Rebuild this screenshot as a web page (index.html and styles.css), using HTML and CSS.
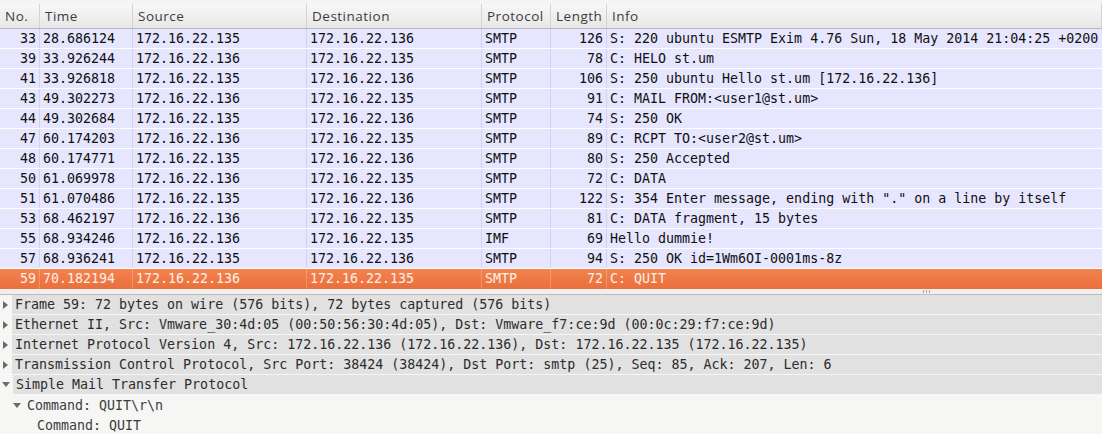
FILE: index.html
```html
<!DOCTYPE html>
<html>
<head>
<meta charset="utf-8">
<link rel="stylesheet" href="styles.css">
</head>
<body>
<div class="list">
  <div class="strip"></div>
  <div class="row head">
    <div class="c no">No.</div><div class="c time">Time</div><div class="c src">Source</div><div class="c dst">Destination</div><div class="c proto">Protocol</div><div class="c len">Length</div><div class="c info">Info</div>
  </div>
  <div class="row pkt"><div class="c no">33</div><div class="c time">28.686124</div><div class="c src">172.16.22.135</div><div class="c dst">172.16.22.136</div><div class="c proto">SMTP</div><div class="c len">126</div><div class="c info">S: 220 ubuntu ESMTP Exim 4.76 Sun, 18 May 2014 21:04:25 +0200</div></div>
  <div class="row pkt"><div class="c no">39</div><div class="c time">33.926244</div><div class="c src">172.16.22.136</div><div class="c dst">172.16.22.135</div><div class="c proto">SMTP</div><div class="c len">78</div><div class="c info">C: HELO st.um</div></div>
  <div class="row pkt"><div class="c no">41</div><div class="c time">33.926818</div><div class="c src">172.16.22.135</div><div class="c dst">172.16.22.136</div><div class="c proto">SMTP</div><div class="c len">106</div><div class="c info">S: 250 ubuntu Hello st.um [172.16.22.136]</div></div>
  <div class="row pkt"><div class="c no">43</div><div class="c time">49.302273</div><div class="c src">172.16.22.136</div><div class="c dst">172.16.22.135</div><div class="c proto">SMTP</div><div class="c len">91</div><div class="c info">C: MAIL FROM:&lt;user1@st.um&gt;</div></div>
  <div class="row pkt"><div class="c no">44</div><div class="c time">49.302684</div><div class="c src">172.16.22.135</div><div class="c dst">172.16.22.136</div><div class="c proto">SMTP</div><div class="c len">74</div><div class="c info">S: 250 OK</div></div>
  <div class="row pkt"><div class="c no">47</div><div class="c time">60.174203</div><div class="c src">172.16.22.136</div><div class="c dst">172.16.22.135</div><div class="c proto">SMTP</div><div class="c len">89</div><div class="c info">C: RCPT TO:&lt;user2@st.um&gt;</div></div>
  <div class="row pkt"><div class="c no">48</div><div class="c time">60.174771</div><div class="c src">172.16.22.135</div><div class="c dst">172.16.22.136</div><div class="c proto">SMTP</div><div class="c len">80</div><div class="c info">S: 250 Accepted</div></div>
  <div class="row pkt"><div class="c no">50</div><div class="c time">61.069978</div><div class="c src">172.16.22.136</div><div class="c dst">172.16.22.135</div><div class="c proto">SMTP</div><div class="c len">72</div><div class="c info">C: DATA</div></div>
  <div class="row pkt"><div class="c no">51</div><div class="c time">61.070486</div><div class="c src">172.16.22.135</div><div class="c dst">172.16.22.136</div><div class="c proto">SMTP</div><div class="c len">122</div><div class="c info">S: 354 Enter message, ending with "." on a line by itself</div></div>
  <div class="row pkt"><div class="c no">53</div><div class="c time">68.462197</div><div class="c src">172.16.22.136</div><div class="c dst">172.16.22.135</div><div class="c proto">SMTP</div><div class="c len">81</div><div class="c info">C: DATA fragment, 15 bytes</div></div>
  <div class="row pkt"><div class="c no">55</div><div class="c time">68.934246</div><div class="c src">172.16.22.136</div><div class="c dst">172.16.22.135</div><div class="c proto">IMF</div><div class="c len">69</div><div class="c info">Hello dummie!</div></div>
  <div class="row pkt"><div class="c no">57</div><div class="c time">68.936241</div><div class="c src">172.16.22.135</div><div class="c dst">172.16.22.136</div><div class="c proto">SMTP</div><div class="c len">94</div><div class="c info">S: 250 OK id=1Wm6OI-0001ms-8z</div></div>
  <div class="row pkt sel"><div class="c no">59</div><div class="c time">70.182194</div><div class="c src">172.16.22.136</div><div class="c dst">172.16.22.135</div><div class="c proto">SMTP</div><div class="c len">72</div><div class="c info">C: QUIT</div></div>
</div>
<div class="splitter"><span class="grip"><i></i><i></i><i></i></span></div>
<div class="tree">
  <div class="node top"><span class="exp closed"></span><span class="label">Frame 59: 72 bytes on wire (576 bits), 72 bytes captured (576 bits)</span></div>
  <div class="node top"><span class="exp closed"></span><span class="label">Ethernet II, Src: Vmware_30:4d:05 (00:50:56:30:4d:05), Dst: Vmware_f7:ce:9d (00:0c:29:f7:ce:9d)</span></div>
  <div class="node top"><span class="exp closed"></span><span class="label">Internet Protocol Version 4, Src: 172.16.22.136 (172.16.22.136), Dst: 172.16.22.135 (172.16.22.135)</span></div>
  <div class="node top"><span class="exp closed"></span><span class="label">Transmission Control Protocol, Src Port: 38424 (38424), Dst Port: smtp (25), Seq: 85, Ack: 207, Len: 6</span></div>
  <div class="node top"><span class="exp open"></span><span class="label">Simple Mail Transfer Protocol</span></div>
  <div class="node lvl1"><span class="exp open"></span><span class="label">Command: QUIT\r\n</span></div>
  <div class="node lvl2"><span class="label">Command: QUIT</span></div>
</div>
</body>
</html>
```
FILE: styles.css
```css
html, body {
  margin: 0;
  padding: 0;
  width: 1102px;
  height: 434px;
  overflow: hidden;
  background: #f2f1f0;
}

.list {
  display: flex;
  flex-direction: column;
  background: #ffffff;
}

.strip {
  height: 4px;
  background: #f4f4f4;
}

.row {
  display: grid;
  grid-template-columns: 40px 93px 174px 175px 69px 56px 1fr;
  height: 20px;
  box-sizing: border-box;
}

.c {
  box-sizing: border-box;
  border-right: 1px solid rgba(80, 80, 120, 0.13);
  padding: 0 3px;
  white-space: nowrap;
  overflow: hidden;
}
.c.info { border-right: none; }

.head {
  height: 25px;
  background: linear-gradient(#f7f7f7, #e7e7e7);
  border-bottom: 1px solid #b8b8b8;
  font-family: "Open Sans", "DejaVu Sans", sans-serif;
  font-size: 13.5px;
  letter-spacing: 0.5px;
  color: #3c3c3c;
  line-height: 25px;
}
.head .c {
  padding: 0 4px 0 5px;
  border-right: 1px solid #d3d3d3;
}

.pkt {
  background: #e7e6ff;
  border-bottom: 1px solid #ffffff;
  font-family: "DejaVu Sans Mono", monospace;
  font-size: 13.3px;
  line-height: 19px;
  color: #101010;
}
.pkt .no, .pkt .len { text-align: right; }

.pkt.sel {
  background: linear-gradient(#f2834f, #ea6f3c);
  color: #fdf0e8;
  border-bottom: none;
  height: 20px;
  line-height: 20px;
}
.pkt.sel .c { border-right-color: rgba(255, 255, 255, 0.22); }
.pkt.sel .info { border-right: none; }

.splitter {
  height: 6px;
  box-sizing: border-box;
  background: #f0efed;
  border-bottom: 1px solid #bdbcba;
  display: flex;
  align-items: flex-start;
}
.grip {
  margin-left: 923px;
  margin-top: 1px;
  display: flex;
  gap: 2px;
}
.grip i {
  display: block;
  width: 1px;
  height: 3px;
  background: #a8a7a4;
}

.tree {
  background: #f6f6f5;
  font-family: "DejaVu Sans Mono", monospace;
  font-size: 13.3px;
  color: #2c2c2c;
}

.node {
  height: 20px;
  display: flex;
  align-items: center;
  white-space: nowrap;
  box-sizing: border-box;
}
.node .label { line-height: 19px; }

.node.top {
  border-bottom: 1px solid #f6f6f5;
}
.node.top .label {
  flex: 1;
  background: #e1e1e1;
  padding-left: 3px;
  height: 19px;
}
.node.top .exp { margin: 0 4px 0 3px; }

.node.lvl1 { padding-left: 13px; color: #3c3c3c; }
.node.lvl1 .exp { margin-right: 6px; }
.node.lvl2 { padding-left: 37px; color: #3c3c3c; }

.exp {
  display: inline-block;
  width: 0;
  height: 0;
  flex: none;
}
.exp.closed {
  border-left: 5px solid #6b6b6b;
  border-top: 4px solid transparent;
  border-bottom: 4px solid transparent;
}
.exp.open {
  border-top: 5px solid #6b6b6b;
  border-left: 4px solid transparent;
  border-right: 4px solid transparent;
}
.node.top .exp.open { margin: 0 3px 0 2px; }
```
